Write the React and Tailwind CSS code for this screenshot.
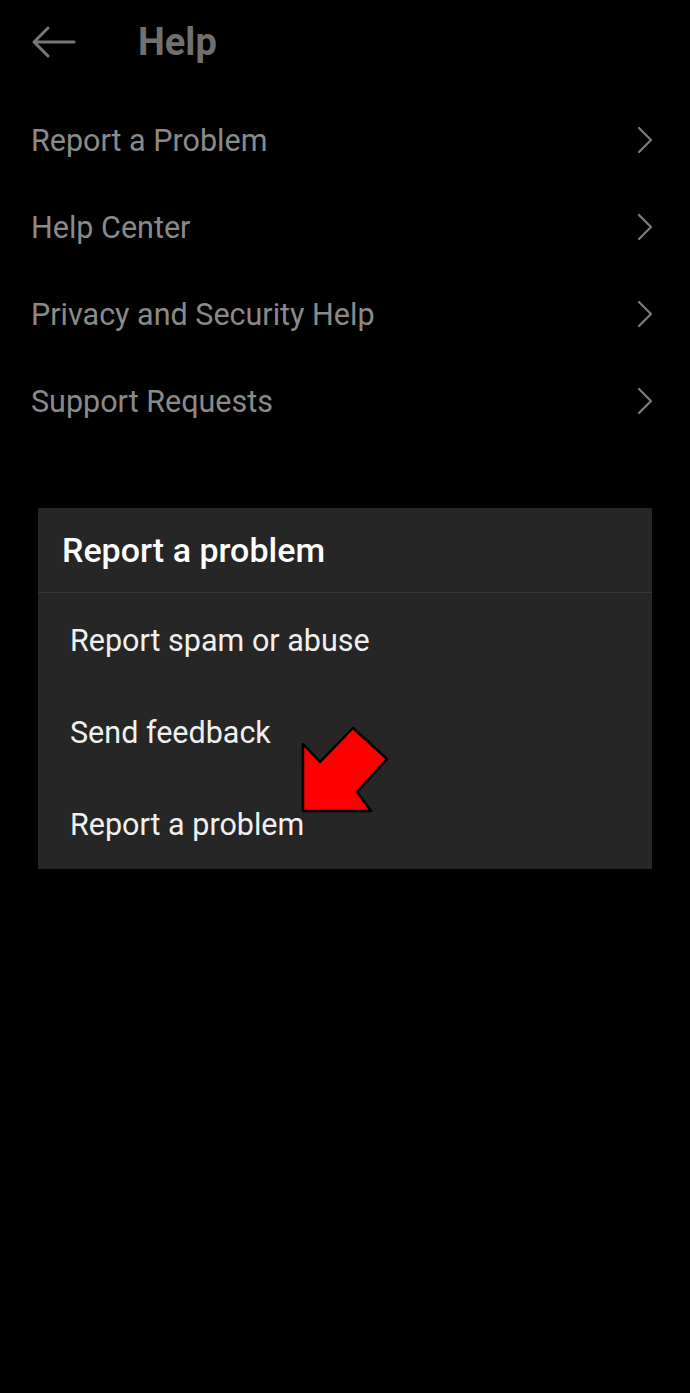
import React from 'react';

const menuItems = ['Report a Problem', 'Help Center', 'Privacy and Security Help', 'Support Requests'];
const dialogItems = ['Report spam or abuse', 'Send feedback', 'Report a problem'];

function Chevron() {
  return (
    <svg width="18" height="28" viewBox="0 0 18 28" fill="none" stroke="#7d7d7d" strokeWidth="2.2" strokeLinecap="round" strokeLinejoin="round">
      <path d="M3 2 L15 14 L3 26" />
    </svg>
  );
}

export default function App() {
  return (
    <div className="w-[690px] h-[1393px] bg-black overflow-hidden" style={{ fontFamily: 'Roboto, "Liberation Sans", sans-serif' }}>
      {/* Header */}
      <div className="h-[84px] flex items-center">
        <div className="ml-[31px] w-[46px] flex items-center">
          <svg width="46" height="34" viewBox="0 0 46 34" fill="none" stroke="#777" strokeWidth="3" strokeLinecap="round" strokeLinejoin="round">
            <path d="M3 17 H43 M17 3 L3 17 L17 31" />
          </svg>
        </div>
        <h1 className="ml-[61px] text-[38px] font-bold text-[#707070] leading-none">Help</h1>
      </div>

      {/* Menu list */}
      <div className="mt-[12px]">
        {menuItems.map(item => (
          <div key={item} className="h-[87px] flex items-center justify-between pl-[31px] pr-[36px]">
            <span className="text-[30.5px] text-[#8a8a8a] pt-[2px]">{item}</span>
            <Chevron />
          </div>
        ))}
      </div>

      {/* Dialog */}
      <div className="relative mx-[38px] mt-[64px] bg-[#262626]">
        <div className="h-[85px] flex items-center pl-[24px] border-b border-[#363636]">
          <h2 className="text-[34px] font-medium text-white">Report a problem</h2>
        </div>
        {dialogItems.map(item => (
          <div key={item} className="h-[92px] flex items-center pl-[32px] pt-[4px]">
            <span className="text-[30.5px] text-[#f0f0f0]">{item}</span>
          </div>
        ))}

        {/* red arrow annotation */}
        <svg className="absolute left-[262px] top-[217px]" width="92" height="92" viewBox="0 0 92 92">
          <polygon points="3,19 20,37 53,3 87,34 57,67 71,86 3,86" fill="#ff0000" stroke="#000" strokeWidth="2.5" strokeLinejoin="round" />
        </svg>
      </div>
    </div>
  );
}
